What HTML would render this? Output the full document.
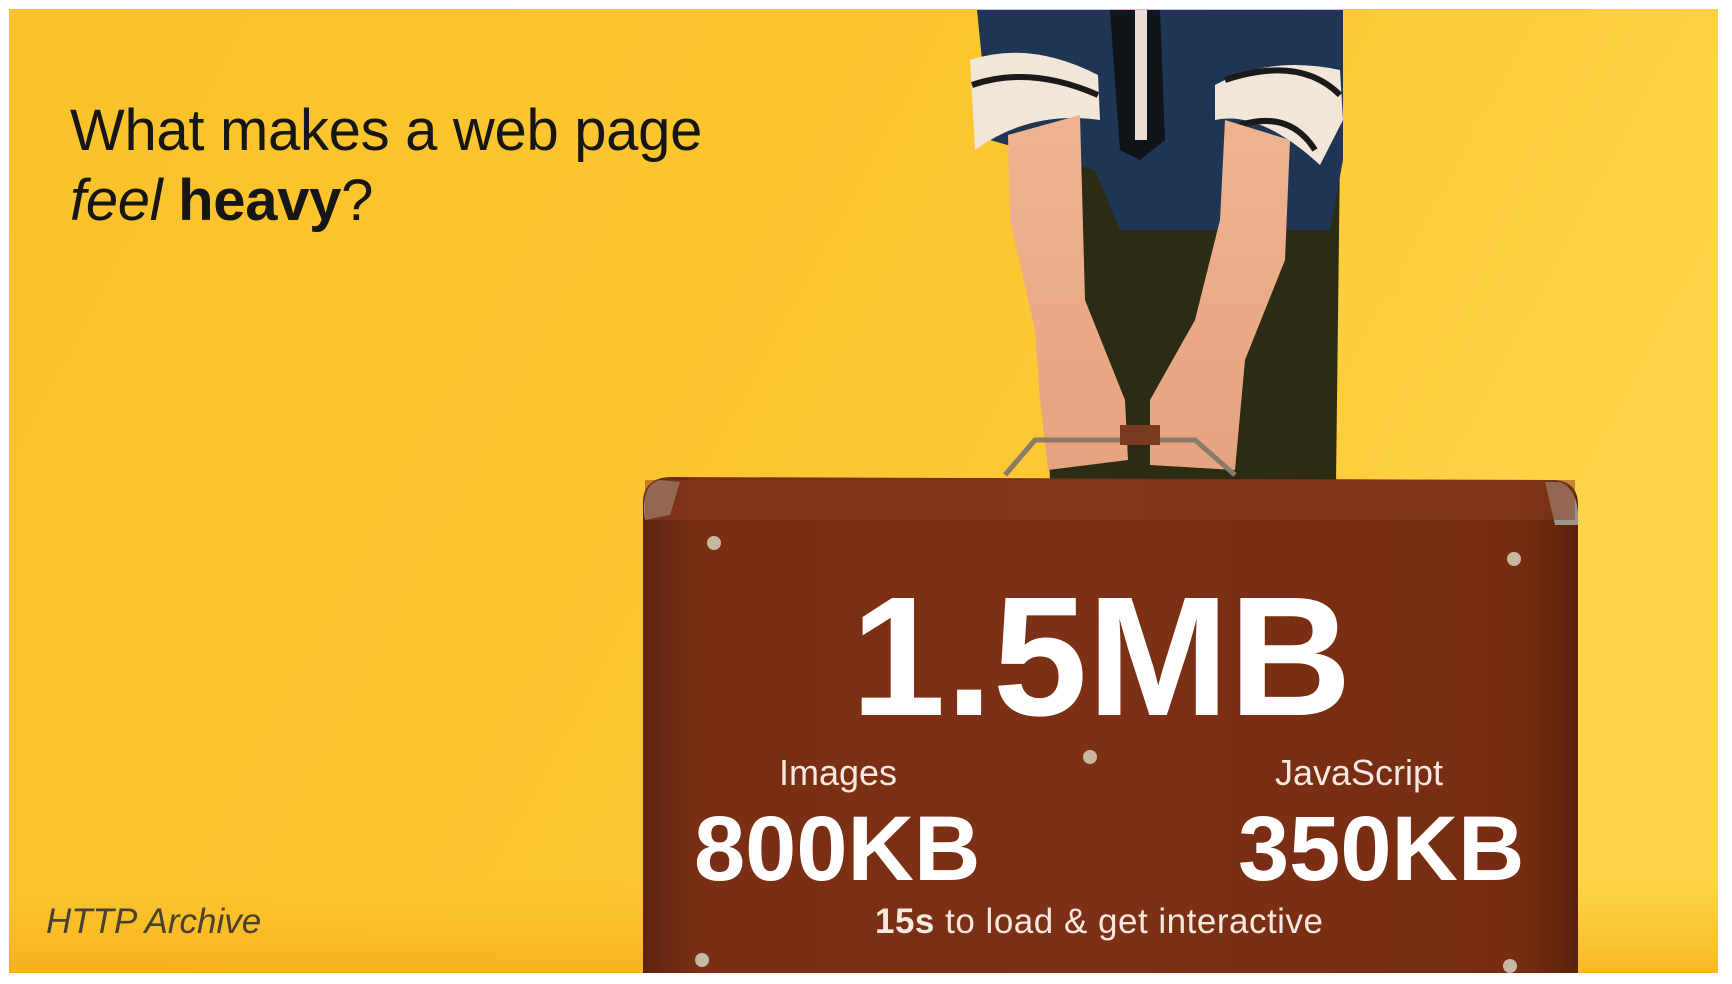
<!DOCTYPE html>
<html><head><meta charset="utf-8"><style>
html,body{margin:0;padding:0;width:1732px;height:984px;background:#fff;overflow:hidden}
.t{position:absolute;font-family:"Liberation Sans",sans-serif;white-space:nowrap}
</style></head><body>
<svg width="1732" height="984" style="position:absolute;left:0;top:0">
<defs>
<linearGradient id="bg" x1="0" y1="0" x2="1" y2="0.3">
<stop offset="0" stop-color="#fbc22a"/><stop offset="0.6" stop-color="#fcc630"/><stop offset="1" stop-color="#fdd448"/>
</linearGradient>
<linearGradient id="bot" x1="0" y1="0" x2="0" y2="1">
<stop offset="0" stop-color="#f8b820" stop-opacity="0"/><stop offset="1" stop-color="#f5a818" stop-opacity="0.7"/>
</linearGradient>
<linearGradient id="case" x1="0" y1="0" x2="1" y2="0">
<stop offset="0" stop-color="#5e2410"/><stop offset="0.06" stop-color="#7a2f14"/><stop offset="0.5" stop-color="#7c3015"/><stop offset="0.94" stop-color="#772d12"/><stop offset="1" stop-color="#5a220c"/>
</linearGradient>
<linearGradient id="skin" x1="0" y1="0" x2="0" y2="1">
<stop offset="0" stop-color="#efb390"/><stop offset="1" stop-color="#e6a380"/>
</linearGradient>
</defs>
<rect x="9" y="9" width="1709" height="964" fill="url(#bg)"/>
<rect x="9" y="880" width="1709" height="93" fill="url(#bot)"/>
<path d="M1040 150 L1340 150 L1336 483 L1050 483 Z" fill="#2c2b14"/>
<path d="M977 10 L1343 10 L1343 160 L1330 230 L1120 230 L1095 170 L990 140 Z" fill="#1f3554"/>
<path d="M1110 10 L1160 10 L1165 140 L1140 160 L1120 150 Z" fill="#0e1418"/>
<rect x="1135" y="10" width="12" height="130" fill="#e8ddd0"/>
<path d="M970 60 Q1030 40 1098 75 L1100 120 Q1030 110 975 150 Z" fill="#f1e6d8"/>
<path d="M972 85 Q1030 65 1098 95" stroke="#1a1a1a" stroke-width="6" fill="none"/>
<path d="M1215 85 Q1270 55 1340 70 L1343 120 L1320 165 Q1260 110 1215 120 Z" fill="#f1e6d8"/>
<path d="M1225 80 Q1300 55 1340 95 M1240 125 Q1290 110 1315 150" stroke="#1a1a1a" stroke-width="6" fill="none"/>
<path d="M1008 135 L1080 115 L1085 300 L1125 400 L1128 460 L1048 470 L1040 400 L1035 330 L1010 220 Z" fill="url(#skin)"/>
<path d="M1225 120 L1290 140 L1285 260 L1245 360 L1235 470 L1150 465 L1150 400 L1195 320 L1220 220 Z" fill="url(#skin)"/>
<path d="M1005 475 L1035 440 L1195 440 L1235 475" stroke="#8a7a6a" stroke-width="5" fill="none"/>
<rect x="1120" y="425" width="40" height="20" fill="#7a3a20"/>
<path d="M643 973 L643 500 Q645 478 670 477 L1555 480 Q1578 482 1578 505 L1578 973 Z" fill="url(#case)"/>
<path d="M660 480 Q640 485 645 520 L670 515 L680 482 Z" fill="#9a948a"/>
<path d="M1560 482 Q1580 490 1578 525 L1555 525 L1545 482 Z" fill="#9a948a"/>
<rect x="645" y="480" width="930" height="40" fill="#8a3a1c" opacity="0.5"/>
<g fill="#c8b8a0"><circle cx="714" cy="543" r="7"/><circle cx="1514" cy="559" r="7"/><circle cx="1090" cy="757" r="7"/><circle cx="702" cy="960" r="7"/><circle cx="1510" cy="966" r="7"/></g>
</svg>
<div class="t" style="left:70px;top:96px;font-size:58px;line-height:70px;color:#161616;letter-spacing:-0.3px">What makes a web page<br><i>feel</i> <b>heavy</b>?</div>
<div class="t" style="left:851px;top:567px;font-size:170px;line-height:180px;font-weight:bold;color:#fff;letter-spacing:0px">1.5MB</div>
<div class="t" style="left:738px;top:752px;width:200px;text-align:center;font-size:36px;color:#f4e8e0">Images</div>
<div class="t" style="left:1259px;top:752px;width:200px;text-align:center;font-size:36px;color:#f4e8e0">JavaScript</div>
<div class="t" style="left:694px;top:799px;font-size:92px;line-height:100px;font-weight:bold;color:#fff;letter-spacing:0px">800KB</div>
<div class="t" style="left:1238px;top:799px;font-size:92px;line-height:100px;font-weight:bold;color:#fff;letter-spacing:0px">350KB</div>
<div class="t" style="left:875px;top:902px;font-size:35px;color:#f4e8e0;letter-spacing:0.5px"><b>15s</b> to load &amp; get interactive</div>
<div class="t" style="left:46px;top:902px;font-size:35px;color:#4a4030;font-style:italic">HTTP Archive</div>
</body></html>
